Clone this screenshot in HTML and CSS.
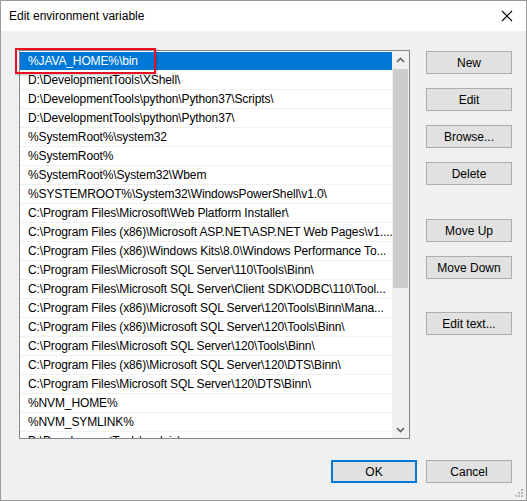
FILE: index.html
```html
<!DOCTYPE html>
<html>
<head>
<meta charset="utf-8">
<link rel="stylesheet" href="styles.css">
</head>
<body>
<div class="window">
  <div class="titlebar">
    <span class="title">Edit environment variable</span>
    <svg class="close" width="12" height="12" viewBox="0 0 12 12"><path d="M1 1 L11 11 M11 1 L1 11" stroke="#000" stroke-width="1.1" fill="none"/></svg>
  </div>
  <div class="content">
    <div class="main">
      <div class="listbox">
        <div class="rows">
          <div class="row selected">%JAVA_HOME%\bin</div>
          <div class="row">D:\DevelopmentTools\XShell\</div>
          <div class="row">D:\DevelopmentTools\python\Python37\Scripts\</div>
          <div class="row">D:\DevelopmentTools\python\Python37\</div>
          <div class="row">%SystemRoot%\system32</div>
          <div class="row">%SystemRoot%</div>
          <div class="row">%SystemRoot%\System32\Wbem</div>
          <div class="row">%SYSTEMROOT%\System32\WindowsPowerShell\v1.0\</div>
          <div class="row">C:\Program Files\Microsoft\Web Platform Installer\</div>
          <div class="row">C:\Program Files (x86)\Microsoft ASP.NET\ASP.NET Web Pages\v1....</div>
          <div class="row">C:\Program Files (x86)\Windows Kits\8.0\Windows Performance To...</div>
          <div class="row">C:\Program Files\Microsoft SQL Server\110\Tools\Binn\</div>
          <div class="row">C:\Program Files\Microsoft SQL Server\Client SDK\ODBC\110\Tool...</div>
          <div class="row">C:\Program Files (x86)\Microsoft SQL Server\120\Tools\Binn\Mana...</div>
          <div class="row">C:\Program Files (x86)\Microsoft SQL Server\120\Tools\Binn\</div>
          <div class="row">C:\Program Files\Microsoft SQL Server\120\Tools\Binn\</div>
          <div class="row">C:\Program Files (x86)\Microsoft SQL Server\120\DTS\Binn\</div>
          <div class="row">C:\Program Files\Microsoft SQL Server\120\DTS\Binn\</div>
          <div class="row">%NVM_HOME%</div>
          <div class="row">%NVM_SYMLINK%</div>
          <div class="row">D:\DevelopmentTools\nodejs\</div>
        </div>
        <div class="scrollbar">
          <div class="arrow up"><svg width="9" height="6" viewBox="0 0 9 6"><path d="M1 5 L4.5 1.5 L8 5" stroke="#606060" stroke-width="1.6" fill="none"/></svg></div>
          <div class="track"><div class="thumb"></div></div>
          <div class="arrow down"><svg width="9" height="6" viewBox="0 0 9 6"><path d="M1 1 L4.5 4.5 L8 1" stroke="#606060" stroke-width="1.6" fill="none"/></svg></div>
        </div>
      </div>
      <div class="buttons">
        <button class="btn">New</button>
        <button class="btn">Edit</button>
        <button class="btn">Browse...</button>
        <button class="btn">Delete</button>
        <button class="btn gap-lg">Move Up</button>
        <button class="btn">Move Down</button>
        <button class="btn gap-xl">Edit text...</button>
      </div>
    </div>
    <div class="footer">
      <button class="btn default">OK</button>
      <button class="btn">Cancel</button>
    </div>
  </div>
  <div class="highlight"></div>
  <svg class="grip" width="10" height="10" viewBox="0 0 10 10">
    <rect x="7" y="1" width="2" height="2" fill="#b8b8b8"/>
    <rect x="4" y="4" width="2" height="2" fill="#b8b8b8"/>
    <rect x="7" y="4" width="2" height="2" fill="#b8b8b8"/>
    <rect x="1" y="7" width="2" height="2" fill="#b8b8b8"/>
    <rect x="4" y="7" width="2" height="2" fill="#b8b8b8"/>
    <rect x="7" y="7" width="2" height="2" fill="#b8b8b8"/>
  </svg>
</div>
</body>
</html>
```

FILE: styles.css
```css
* { box-sizing: border-box; }
html, body { margin: 0; padding: 0; }
body {
  font-family: "Liberation Sans", Arial, sans-serif;
  font-size: 12px;
  color: #000;
}
.window {
  position: relative;
  width: 527px;
  height: 501px;
  border: 1px solid #9a9a9a;
  background: #f0f0f0;
  overflow: hidden;
}
.titlebar {
  height: 30px;
  background: #fff;
  display: flex;
  align-items: center;
  justify-content: space-between;
  padding: 0 13px 0 8px;
}
.title { font-size: 12px; }
.close { display: block; }
.content {
  padding: 19px 14px 0 18px;
}
.main {
  display: flex;
  gap: 16px;
}
.listbox {
  width: 391px;
  height: 389px;
  border: 1px solid #828790;
  background: #fff;
  display: flex;
  overflow: hidden;
}
.rows {
  flex: 1;
  min-width: 0;
  overflow: hidden;
  padding-top: 1px;
}
.row {
  height: 19px;
  line-height: 18px;
  padding-left: 8px;
  border-bottom: 1px solid #f0f0f0;
  white-space: nowrap;
  overflow: hidden;
  letter-spacing: -0.12px;
}
.row.selected {
  background: #0078d7;
  color: #fff;
  border-bottom-color: #fff;
}
.scrollbar {
  width: 17px;
  flex: none;
  background: #f0f0f0;
  display: flex;
  flex-direction: column;
}
.arrow {
  height: 17px;
  display: flex;
  align-items: center;
  justify-content: center;
}
.track {
  flex: 1;
  padding: 1px 1px 0 1px;
}
.thumb {
  height: 219px;
  background: #cdcdcd;
}
.buttons {
  display: flex;
  flex-direction: column;
  padding-top: 1px;
  gap: 14px;
}
.btn {
  width: 86px;
  height: 23px;
  background: #e1e1e1;
  border: 1px solid #adadad;
  font-family: "Liberation Sans", Arial, sans-serif;
  font-size: 12px;
  color: #000;
  padding: 0;
  margin: 0;
}
.btn.gap-lg { margin-top: 20px; }
.btn.gap-xl { margin-top: 19px; }
.footer {
  display: flex;
  justify-content: flex-end;
  gap: 9px;
  padding-top: 21px;
}
.btn.default {
  border: 2px solid #0078d7;
}
.highlight {
  position: absolute;
  left: 14px;
  top: 47px;
  width: 141px;
  height: 26px;
  border: 2px solid #e81123;
  box-shadow: 1px 1px 2px rgba(0,0,0,0.25);
}
.grip {
  position: absolute;
  right: 2px;
  bottom: 2px;
}
```
